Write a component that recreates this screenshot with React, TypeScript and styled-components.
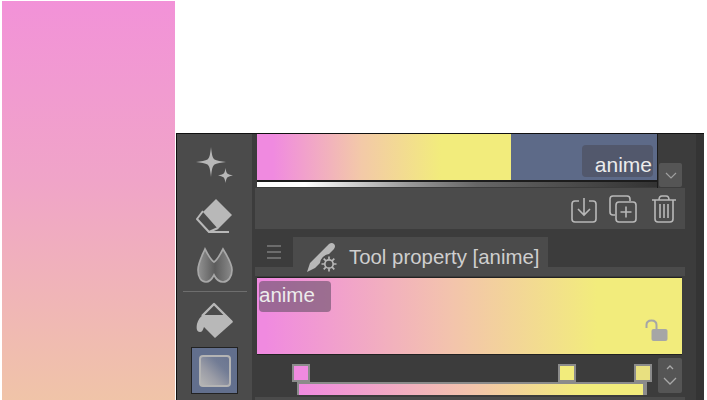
import React, { FC } from 'react'
import styled, { createGlobalStyle } from 'styled-components'

const colors = {
    panel: '#4b4b4b',
    dark: '#3c3c3c',
    icon: '#b8b8b8',
    pink: '#f08ae0',
    yellow: '#f2ec7c',
    handle: '#8b8b8b',
}

const GlobalStyle = createGlobalStyle`
    html, body {
        margin: 0;
        padding: 0;
        width: 707px;
        height: 400px;
        overflow: hidden;
        background: #fff;
        font-family: "Liberation Sans", Arial, sans-serif;
    }
`

const Page = styled.div`
    display: flex;
    width: 707px;
    height: 400px;
    overflow: hidden;
`
const SwatchPreview = styled.div`
    flex: none;
    width: 173px;
    height: 399px;
    margin: 1px 1px 0 2px;
    background: linear-gradient(180deg, #f292d8 0%, #f0a4c8 45%, #f0c4a8 100%);
`
const Panel = styled.div`
    flex: none;
    display: flex;
    width: 528px;
    height: 267px;
    margin-top: 133px;
    background: ${colors.dark};
    border-top: 1px solid #111;
    border-left: 1px solid #111;
    box-sizing: border-box;
`
const ToolRail = styled.div`
    flex: none;
    width: 75px;
    display: flex;
    flex-direction: column;
    align-items: center;
    background: ${colors.panel};
    padding-top: 7px;
    box-sizing: border-box;
`
const RailSlot = styled.div`
    flex: none;
    width: 60px;
    height: 50px;
    display: flex;
    align-items: center;
    justify-content: center;
`
const RailDivider = styled.div`
    flex: none;
    width: 64px;
    height: 1px;
    margin-bottom: 4px;
    background: #6e6e6e;
`
const ActiveTool = styled.div`
    flex: none;
    width: 47px;
    height: 47px;
    margin-top: 1px;
    display: flex;
    align-items: center;
    justify-content: center;
    background: #626f8d;
    border: 1px solid #222;
    box-sizing: border-box;
`
const ActiveGlyph = styled.div`
    width: 32px;
    height: 32px;
    box-sizing: border-box;
    border: 2px solid #b4b4b4;
    border-radius: 4px;
    background: linear-gradient(45deg, #b4b4b4 0%, #9a9ca6 35%, #727c95 70%, #6a7590 100%);
`
const Main = styled.div`
    flex: none;
    width: 430px;
    margin-left: 3px;
    display: flex;
    flex-direction: column;
`
const TopRow = styled.div`
    flex: none;
    height: 54px;
    display: flex;
    background: ${colors.dark};
`
const TopLeft = styled.div`
    width: 401px;
    margin-left: 2px;
    display: flex;
    flex-direction: column;
    border-right: 1px solid #1c1c1c;
    box-sizing: border-box;
`
const TopGradient = styled.div`
    height: 48px;
    display: flex;
    justify-content: flex-end;
    align-items: flex-start;
    background: linear-gradient(90deg, ${colors.pink} 0%, ${colors.pink} 4%, #f3c9a8 26%, ${colors.yellow} 46%, ${colors.yellow} 63.4%, #5d6a88 63.5%, #5d6a88 100%);
    border-bottom: 2px solid #1c1c1c;
    box-sizing: border-box;
    padding: 11px 4px 0 0;
`
const NameTag = styled.div<{ $tone: string; $width: number; $height: number }>`
    width: ${(p) => p.$width}px;
    height: ${(p) => p.$height}px;
    background: ${(p) => p.$tone};
    border-radius: 4px;
    color: #ececec;
    box-sizing: border-box;
    white-space: nowrap;
`
const TopTag = styled(NameTag)`
    font-size: 21px;
    line-height: 32px;
    text-align: right;
    padding: 4px 1px 0 0;
`
const RampBar = styled.div`
    height: 5px;
    background: linear-gradient(90deg, #fff 0%, #fff 12%, #999 38%, #666 55%, #333 100%);
`
const ScrollSide = styled.div`
    flex: 1;
    display: flex;
    align-items: flex-end;
    justify-content: flex-end;
    padding-right: 3px;
    padding-bottom: 1px;
`
const ChevronButton = styled.div`
    width: 23px;
    height: 24px;
    display: flex;
    align-items: center;
    justify-content: center;
    background: #555;
    border-radius: 2px;
`
const ActionBar = styled.div`
    flex: none;
    height: 41px;
    display: flex;
    align-items: flex-end;
    justify-content: flex-end;
    gap: 12px;
    padding: 0 9px 6px 0;
    box-sizing: border-box;
    background: ${colors.panel};
`
const TabStrip = styled.div`
    flex: none;
    height: 40px;
    margin-top: 8px;
    display: flex;
    flex-direction: column;
`
const TabRow = styled.div`
    flex: none;
    height: 30px;
    display: flex;
    align-items: flex-end;
    position: relative;
    z-index: 1;
`
const MenuHandle = styled.div`
    width: 38px;
    height: 30px;
    display: flex;
    align-items: center;
    justify-content: center;
`
const Tab = styled.div`
    width: 255px;
    height: 30px;
    display: flex;
    align-items: flex-start;
    gap: 11px;
    padding: 6px 0 0 14px;
    box-sizing: border-box;
    background: ${colors.panel};
    color: #cfcfcf;
    font-size: 20.4px;
    white-space: nowrap;
`
const TabLabel = styled.span`
    line-height: 28px;
`
const TabFloor = styled.div`
    flex: none;
    height: 9px;
    background: ${colors.panel};
`
const Editor = styled.div`
    flex: none;
    height: 78px;
    margin: 0 3px 0 2px;
    position: relative;
    background: linear-gradient(90deg, ${colors.pink} 0%, ${colors.pink} 2%, #f3c4ac 46%, ${colors.yellow} 80%, ${colors.yellow} 100%);
    border-top: 1px solid #222;
    border-bottom: 1px solid #222;
    box-sizing: border-box;
    padding: 3px 0 0 2px;
`
const EditorTag = styled(NameTag)`
    font-size: 20.5px;
    line-height: 28px;
`
const Lock = styled.div`
    position: absolute;
    right: 14px;
    bottom: 12px;
    line-height: 0;
`
const SliderRow = styled.div`
    flex: none;
    height: 42px;
    display: flex;
    padding: 3px 3px 0 37px;
    box-sizing: border-box;
`
const Track = styled.div`
    flex: none;
    width: 364px;
    height: 36px;
    position: relative;
`
const TrackFill = styled.div`
    position: absolute;
    left: 5px;
    top: 24px;
    width: 350px;
    height: 13px;
    box-sizing: border-box;
    border-left: 2px solid ${colors.handle};
    border-right: 4px solid ${colors.handle};
    border-top: 2px solid ${colors.handle};
    background: linear-gradient(90deg, ${colors.pink} 0%, #f3c4ac 50%, ${colors.yellow} 82%, ${colors.yellow} 100%);
`
const Stop = styled.div<{ $left: number; $fill: string }>`
    position: absolute;
    left: ${(p) => p.$left}px;
    top: 6px;
    width: 18px;
    height: 18px;
    box-sizing: border-box;
    border: 2px solid ${colors.handle};
    background: ${(p) => p.$fill};
`
const Stepper = styled.div`
    flex: none;
    width: 24px;
    height: 35px;
    margin-left: 2px;
    display: flex;
    align-items: center;
    justify-content: center;
    background: #555;
    border-radius: 2px;
`
const BottomEdge = styled.div`
    flex: none;
    height: 3px;
    background: ${colors.panel};
`
const Gutter = styled.div`
    flex: 1;
    background: linear-gradient(90deg, #3c3c3c 0 11px, #343434 11px);
`

const Sparkle: FC = () => (
    <svg width="38" height="38" viewBox="0 0 38 38" fill={colors.icon}>
        <path d="M15 0 C15.8 8 16.6 11 18.5 12.5 C20.5 13.8 25 14.4 30 15 C25 15.6 20.5 16.2 18.5 17.5 C16.6 19 15.8 22 15 30 C14.2 22 13.4 19 11.5 17.5 C9.5 16.2 5 15.6 0 15 C5 14.4 9.5 13.8 11.5 12.5 C13.4 11 14.2 8 15 0 Z" />
        <path d="M29.5 21 C30 24.5 30.6 26 31.6 26.8 C32.8 27.6 34.6 28 37 28.5 C34.6 29 32.8 29.4 31.6 30.2 C30.6 31 30 32.5 29.5 36 C29 32.5 28.4 31 27.4 30.2 C26.2 29.4 24.4 29 22 28.5 C24.4 28 26.2 27.6 27.4 26.8 C28.4 26 29 24.5 29.5 21 Z" />
    </svg>
)

const Eraser: FC = () => (
    <svg width="37" height="36" viewBox="0 0 37 36">
        <path d="M20 1 L36 17 L22 31 L7 14 Z" fill={colors.icon} />
        <path d="M7 13 L1 21 L13 34 L22 30" fill="none" stroke={colors.icon} strokeWidth="2" strokeLinejoin="round" />
        <path d="M13 34 H33" stroke={colors.icon} strokeWidth="2" />
    </svg>
)

const Blend: FC = () => (
    <svg width="38" height="38" viewBox="0 0 38 38">
        <defs>
            <linearGradient id="blendFill" x1="0" y1="0" x2="1" y2="0">
                <stop offset="0" stopColor="#929292" />
                <stop offset="0.5" stopColor="#5c5c5c" />
                <stop offset="1" stopColor="#8a8a8a" />
            </linearGradient>
        </defs>
        <path
            d="M9 2 C12 8 15 13 18 15 C21 13 24 8 27 2 C31 9 36 16 36 23 C36 30 32 35 27 35 C23 35 20 32 18 28 C16 32 13 35 10 35 C5 35 2 30 2 23 C2 16 6 9 9 2 Z"
            fill="url(#blendFill)"
            stroke="#a8a8a8"
            strokeWidth="1.7"
        />
    </svg>
)

const Bucket: FC = () => (
    <svg width="38" height="38" viewBox="0 0 38 38">
        <path d="M6 14 L18 2 L36 20" fill="none" stroke={colors.icon} strokeWidth="2.4" strokeLinejoin="round" />
        <path
            d="M7 13 H30 L37 20 L19 36 L8 25 C7 28 6 30 4 30 C1 30 0 27 1 22 C2 18 4 15 7 13 Z"
            fill={colors.icon}
        />
    </svg>
)

const ChevronDown: FC = () => (
    <svg width="12" height="7" viewBox="0 0 12 7" fill="none" stroke="#a0a0a0" strokeWidth="1.2">
        <path d="M1 1 L6 6 L11 1" />
    </svg>
)

const StepperIcon: FC = () => (
    <svg width="14" height="26" viewBox="0 0 14 26" fill="none" stroke="#a8a8a8" strokeWidth="1.3">
        <path d="M4 6 L7 3 L10 6" />
        <path d="M1 15 L7 21 L13 15" />
    </svg>
)

const SaveIcon: FC = () => (
    <svg width="26" height="26" viewBox="0 0 26 26" fill="none" stroke={colors.icon} strokeWidth="1.6">
        <path d="M8 4 H4 Q1 4 1 7 V22 Q1 25 4 25 H22 Q25 25 25 22 V7 Q25 4 22 4 H18" />
        <path d="M13 1 V18 M7 12 L13 18 L19 12" />
    </svg>
)

const DuplicateIcon: FC = () => (
    <svg width="28" height="28" viewBox="0 0 28 28" fill="none" stroke={colors.icon} strokeWidth="1.6">
        <path d="M6 20 H4 Q1 20 1 17 V4 Q1 1 4 1 H18 Q21 1 21 4 V6" />
        <rect x="7" y="7" width="20" height="20" rx="3" />
        <path d="M17 11.5 V22.5 M11.5 17 H22.5" />
    </svg>
)

const TrashIcon: FC = () => (
    <svg width="27" height="28" viewBox="-3 0 27 28" fill="none" stroke={colors.icon} strokeWidth="1.6">
        <path d="M0 5 H24 M7 5 Q7 1 10 1 H14 Q17 1 17 5" />
        <path d="M3 5 V24 Q3 27 6 27 H18 Q21 27 21 24 V5" />
        <path d="M8 9 V23 M12 9 V23 M16 9 V23" />
    </svg>
)

const MenuIcon: FC = () => (
    <svg width="16" height="16" viewBox="0 0 16 16" stroke="#7c7c7c" strokeWidth="1.6">
        <path d="M1 2 H15 M1 8 H15 M1 14 H15" />
    </svg>
)

const ToolPropertyIcon: FC = () => (
    <svg width="31" height="31" viewBox="0 0 31 31" style={{ flex: 'none' }}>
        <path d="M0 29 L3 20 L22 1 Q25 -1 27 1 Q29 3 27 6 L22 11 A10 10 0 0 0 13 20 L8 25 Z" fill={colors.icon} />
        <g fill="none" stroke={colors.icon} strokeWidth="1.7">
            <circle cx="22" cy="21" r="4.2" />
            <path d="M22 13.5 V16.5 M22 25.5 V28.5 M14.5 21 H17.5 M26.5 21 H29.5 M16.7 15.7 L18.9 17.9 M25.1 24.1 L27.3 26.3 M27.3 15.7 L25.1 17.9 M18.9 24.1 L16.7 26.3" />
        </g>
    </svg>
)

const LockIcon: FC = () => (
    <svg width="23" height="23" viewBox="0 0 23 23">
        <path d="M1.5 9 V6 Q1.5 1.5 6.5 1.5 Q11.5 1.5 11.5 6 V10" fill="none" stroke="#a6a6a6" strokeWidth="2" />
        <rect x="6.5" y="10" width="16" height="12" rx="2" fill="#a6a6a6" />
    </svg>
)

const stops = [
    { left: 0, fill: colors.pink },
    { left: 266, fill: colors.yellow },
    { left: 342, fill: '#e8e080' },
]

const App: FC = () => (
    <Page>
        <GlobalStyle />
        <SwatchPreview />
        <Panel>
            <ToolRail>
                <RailSlot>
                    <Sparkle />
                </RailSlot>
                <RailSlot>
                    <Eraser />
                </RailSlot>
                <RailSlot>
                    <Blend />
                </RailSlot>
                <RailDivider />
                <RailSlot>
                    <Bucket />
                </RailSlot>
                <ActiveTool>
                    <ActiveGlyph />
                </ActiveTool>
            </ToolRail>
            <Main>
                <TopRow>
                    <TopLeft>
                        <TopGradient>
                            <TopTag $tone="#52586c" $width={71} $height={32}>
                                anime
                            </TopTag>
                        </TopGradient>
                        <RampBar />
                    </TopLeft>
                    <ScrollSide>
                        <ChevronButton>
                            <ChevronDown />
                        </ChevronButton>
                    </ScrollSide>
                </TopRow>
                <ActionBar>
                    <SaveIcon />
                    <DuplicateIcon />
                    <TrashIcon />
                </ActionBar>
                <TabStrip>
                    <TabRow>
                        <MenuHandle>
                            <MenuIcon />
                        </MenuHandle>
                        <Tab>
                            <ToolPropertyIcon />
                            <TabLabel>Tool property [anime]</TabLabel>
                        </Tab>
                    </TabRow>
                    <TabFloor />
                </TabStrip>
                <Editor>
                    <EditorTag $tone="rgba(110,85,110,0.65)" $width={72} $height={31}>
                        anime
                    </EditorTag>
                    <Lock>
                        <LockIcon />
                    </Lock>
                </Editor>
                <SliderRow>
                    <Track>
                        <TrackFill />
                        {stops.map((stop) => (
                            <Stop key={stop.left} $left={stop.left} $fill={stop.fill} />
                        ))}
                    </Track>
                    <Stepper>
                        <StepperIcon />
                    </Stepper>
                </SliderRow>
                <BottomEdge />
            </Main>
            <Gutter />
        </Panel>
    </Page>
)

export default App
